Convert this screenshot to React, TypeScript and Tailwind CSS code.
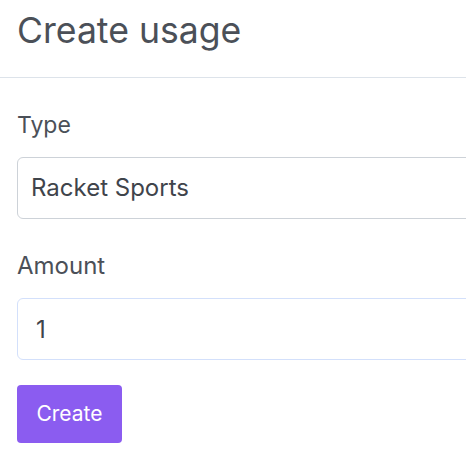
export default function App() {
  return (
    <div className="min-h-screen bg-white font-['Inter',sans-serif] text-[#4b5058]">
      <header className="border-b border-[#dde3ea] px-[17px] pt-[6px] pb-[21px]">
        <h1 className="text-[35.6px] leading-[50px] font-normal">Create usage</h1>
      </header>
      <form className="flex flex-col pl-[17px] pt-[31px]" onSubmit={(e) => e.preventDefault()}>
        <label className="text-[23px] leading-[32px]">Type</label>
        <div className="mt-[16px] flex h-[62px] w-[470px] items-center rounded-[6px] border border-[#cdd2d8] px-[13px] text-[24px] text-[#3f444b]">
          Racket Sports
        </div>
        <label className="mt-[31px] text-[24px] leading-[32px]">Amount</label>
        <input
          defaultValue="1"
          className="mt-[16px] h-[62px] w-[470px] rounded-[6px] border border-[#d3e0fb] px-[18px] text-[24px] text-[#3f444b] outline-none"
        />
        <button
          type="submit"
          className="mt-[25px] h-[58px] w-[105px] rounded-[4px] bg-[#8b5cf0] text-[21px] text-white"
        >
          Create
        </button>
      </form>
    </div>
  );
}
